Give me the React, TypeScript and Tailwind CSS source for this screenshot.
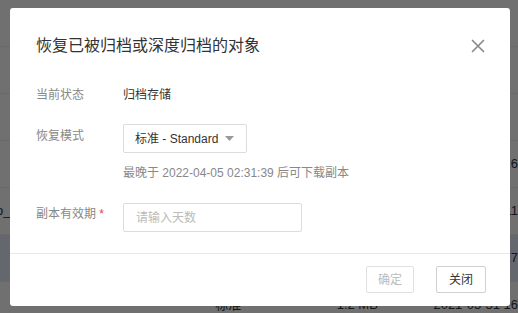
const font = { fontFamily: '"Liberation Sans", "Noto Sans CJK SC", sans-serif' };

const rows = [
  { name: "", cls: "", size: "", time: "", active: false },
  { name: "", cls: "", size: "", time: "", active: false },
  { name: "", cls: "", size: "", time: "", active: false },
  { name: "", cls: "", size: "", time: "2021-03-31 16", active: false },
  { name: "o_l", cls: "", size: "", time: "2021-03-31 11", active: false },
  { name: "", cls: "", size: "", time: "2021-03-31 17", active: true },
  { name: "", cls: "标准", size: "1.2 MB", time: "2021-03-31 16", active: false },
];

function BackgroundTable() {
  return (
    <div className="bg-white">
      {rows.map((r, i) => (
        <div
          key={i}
          className={`flex items-center h-[47px] border-b border-[#eeeeee] text-[13px] text-[#333] whitespace-nowrap overflow-hidden ${
            r.active ? "bg-[#e3ebf7]" : ""
          }`}
        >
          <div className="w-[222px] -ml-[4px]">{r.name}</div>
          <div className="w-[123px]">{r.cls}</div>
          <div className="w-[98px]">{r.size}</div>
          <div className="flex-1">{r.time}</div>
        </div>
      ))}
    </div>
  );
}

function CloseIcon() {
  return (
    <svg width="14" height="14" viewBox="0 0 14 14" className="block">
      <path d="M1.5 1.5 L12.5 12.5 M12.5 1.5 L1.5 12.5" stroke="#8a8a8a" strokeWidth="1.7" strokeLinecap="round" />
    </svg>
  );
}

export default function App() {
  return (
    <div className="relative w-[518px] h-[313px] overflow-hidden" style={font}>
      <BackgroundTable />
      <div className="absolute inset-0 bg-black/[0.56]" />

      {/* Modal */}
      <div className="absolute left-[10px] top-[8px] w-[500px] h-[298px] bg-white rounded-[3px] flex flex-col">
        <div className="flex items-center justify-between pl-[26px] pr-[25px] pt-[26px]">
          <h2 className="text-[16px] leading-[24px] text-[#333]">恢复已被归档或深度归档的对象</h2>
          <button className="w-[14px] h-[14px]">
            <CloseIcon />
          </button>
        </div>

        <div className="pl-[26px] pt-[27px] text-[12px] leading-[20px]">
          <div className="flex">
            <div className="w-[87px] text-[#888]">当前状态</div>
            <div className="text-[#333]">归档存储</div>
          </div>

          <div className="flex mt-[19px]">
            <div className="w-[87px] pt-[2px] text-[#888]">恢复模式</div>
            <div>
              <div className="w-[124px] h-[29px] border border-[#dcdcdc] rounded-[2px] flex items-center justify-between pl-[11px] pr-[12px] text-[#333]">
                <span>标准 - Standard</span>
                <svg width="9" height="5" viewBox="0 0 9 5">
                  <path d="M0 0 L9 0 L4.5 5 Z" fill="#999" />
                </svg>
              </div>
              <div className="mt-[10px] text-[#888]">最晚于 2022-04-05 02:31:39 后可下载副本</div>
            </div>
          </div>

          <div className="flex mt-[20px]">
            <div className="w-[87px] pt-[1px] text-[#888]">
              副本有效期 <span className="text-[#e54545]">*</span>
            </div>
            <input
              placeholder="请输入天数"
              className="w-[179px] h-[29px] border border-[#dcdcdc] rounded-[2px] px-[12px] text-[12px] text-[#333] placeholder:text-[#bbb] outline-none"
              style={font}
            />
          </div>
        </div>

        <div className="mt-[21px] border-t border-[#e8e8e8]" />

        <div className="flex justify-end gap-[22px] pt-[12px] pr-[24px] text-[12px]">
          <button className="w-[48px] h-[27px] border border-[#e0e0e0] rounded-[2px] text-[#bbb]">确定</button>
          <button className="w-[50px] h-[27px] border border-[#d0d0d0] rounded-[2px] text-[#333]">关闭</button>
        </div>
      </div>
    </div>
  );
}
